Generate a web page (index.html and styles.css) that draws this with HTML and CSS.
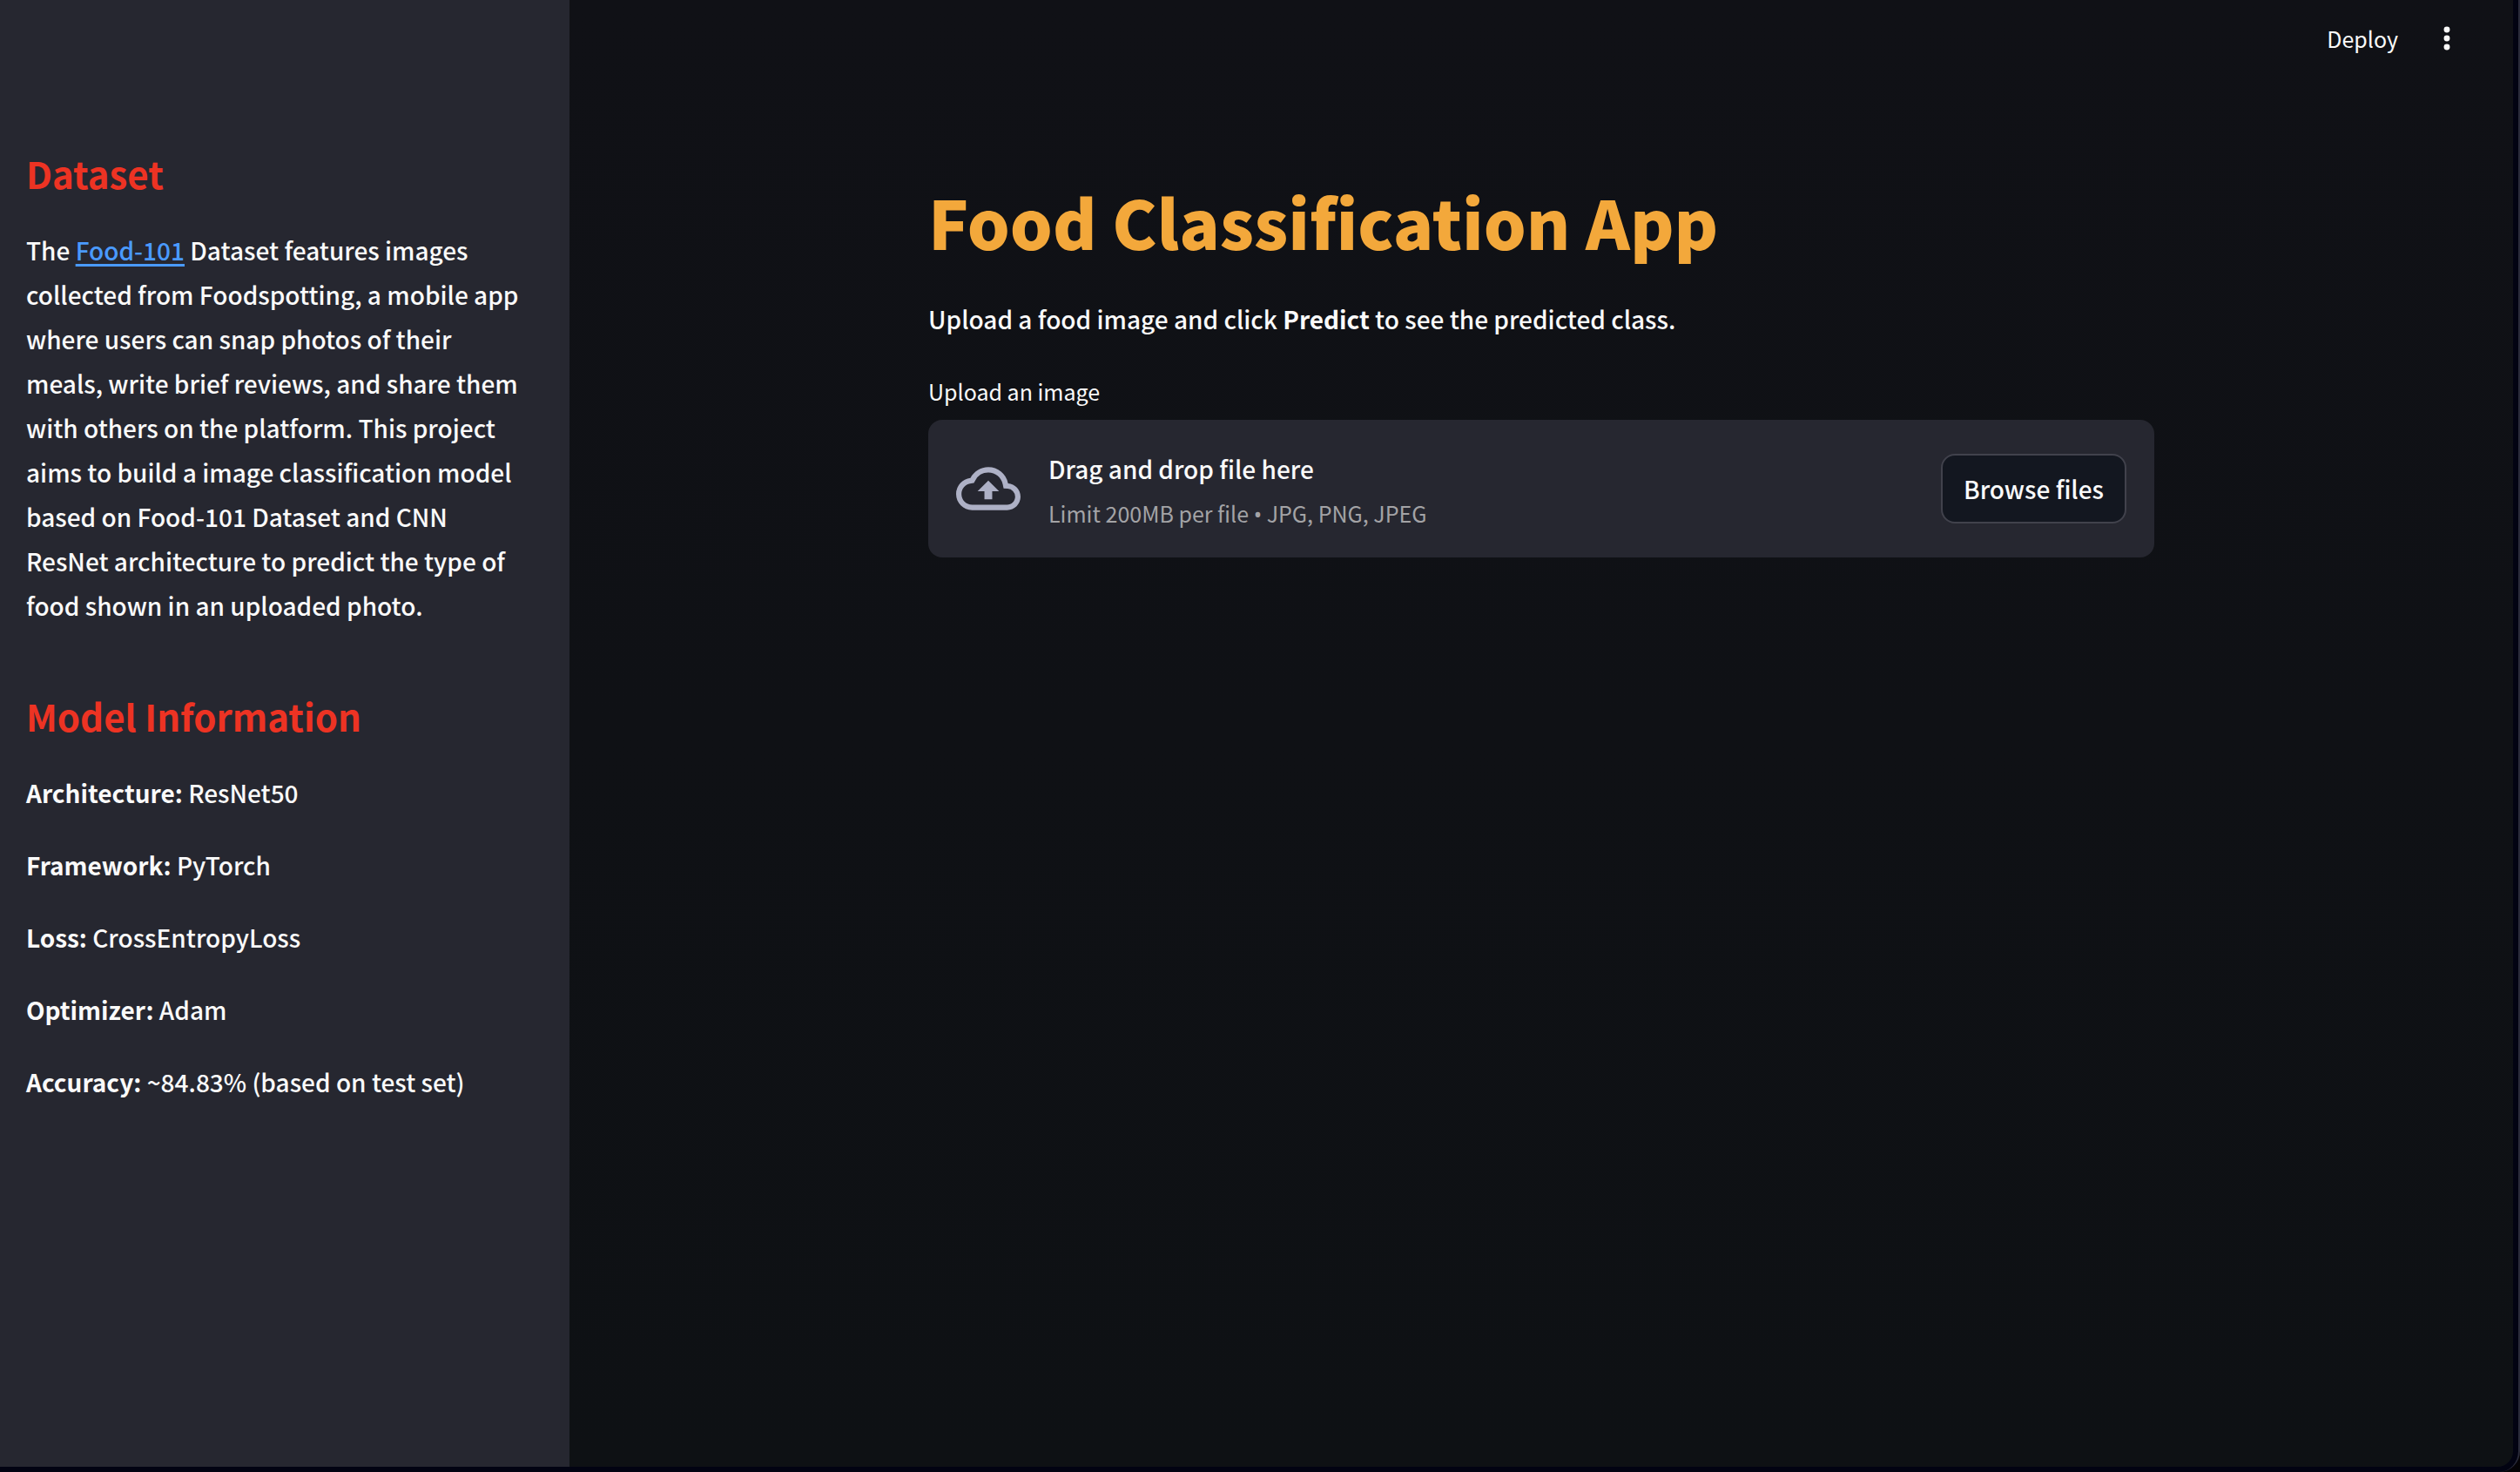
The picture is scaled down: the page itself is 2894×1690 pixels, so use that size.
FILE: index.html
```html
<!DOCTYPE html>
<html lang="en">
<head>
<meta charset="utf-8">
<meta name="viewport" content="width=device-width, initial-scale=1">
<title>Food Classification App</title>
<link rel="stylesheet" href="styles.css">
</head>
<body>
<div class="window">
  <div class="app">
    <aside class="sidebar">
      <section class="section">
        <h2>Dataset</h2>
        <p>The <a href="#food-101">Food-101</a> Dataset features images collected from Foodspotting, a mobile app where users can snap photos of their meals, write brief reviews, and share them with others on the platform. This project aims to build a image classification model based on Food-101 Dataset and CNN ResNet architecture to predict the type of food shown in an uploaded photo.</p>
      </section>
      <section class="section">
        <h2>Model Information</h2>
        <p><strong>Architecture:</strong> ResNet50</p>
        <p><strong>Framework:</strong> PyTorch</p>
        <p><strong>Loss:</strong> CrossEntropyLoss</p>
        <p><strong>Optimizer:</strong> Adam</p>
        <p><strong>Accuracy:</strong> ~84.83% (based on test set)</p>
      </section>
    </aside>
    <div class="content">
      <header class="toolbar">
        <button type="button" class="deploy">Deploy</button>
        <button type="button" class="menu" aria-label="Main menu">
          <svg width="32" height="32" viewBox="0 0 24 24" fill="currentColor" aria-hidden="true"><circle cx="12" cy="4.500" r="2.600"/><circle cx="12" cy="12" r="2.600"/><circle cx="12" cy="19.500" r="2.600"/></svg>
        </button>
      </header>
      <main class="main">
        <h1>Food Classification App</h1>
        <p>Upload a food image and click <strong>Predict</strong> to see the predicted class.</p>
        <label class="label" for="upload">Upload an image</label>
        <div class="dropzone">
          <input class="file" id="upload" type="file" accept=".jpg,.png,.jpeg">
          <svg class="cloud" width="74" height="74" viewBox="0 0 24 24" fill="currentColor" aria-hidden="true"><path d="M19.350 10.040A7.490 7.490 0 0 0 12 4C9.110 4 6.600 5.640 5.350 8.040A5.994 5.994 0 0 0 0 14c0 3.310 2.690 6 6 6h13c2.760 0 5-2.240 5-5 0-2.640-2.050-4.780-4.650-4.960zM19 18H6c-2.210 0-4-1.790-4-4 0-2.050 1.530-3.760 3.560-3.970l1.070-.11.5-.95A5.469 5.469 0 0 1 12 6c2.620 0 4.880 1.860 5.390 4.430l.3 1.500 1.530.11A2.980 2.980 0 0 1 22 15c0 1.650-1.350 3-3 3zM8 13h2.550v3h2.900v-3H16l-4-4z"/></svg>
          <div class="hint">
            <span>Drag and drop file here</span>
            <small>Limit 200MB per file <span class="bullet">•</span> JPG, PNG, JPEG</small>
          </div>
          <button type="button" class="browse">Browse files</button>
        </div>
      </main>
    </div>
  </div>
</div>
</body>
</html>
```
FILE: styles.css
```css
* {
  box-sizing: border-box;
}

body {
  margin: 0;
  background: #050306;
  color: #fafafa;
  font-family: "Noto Sans CJK SC", "Noto Sans", sans-serif;
  font-size: 28px;
  font-weight: 500;
  line-height: 51px;
}

h1, h2, p {
  margin: 0;
}

button {
  font: inherit;
  color: inherit;
  background: none;
  border: 0;
  padding: 0;
}

.window {
  display: flex;
  min-height: 100vh;
  padding: 0 6px 6px 0;
  border-right: 2px solid #2a2b3a;
  border-radius: 0 0 24px 0;
  background: #020312;
}

.app {
  flex: 1;
  display: flex;
  border-radius: 0 0 18px 0;
  background: linear-gradient(#101116, #0e1114);
}

.sidebar {
  flex: none;
  display: flex;
  flex-direction: column;
  gap: 72px;
  width: 654px;
  padding: 170px 48px 0 30px;
  background: #262730;
}

.section {
  display: flex;
  flex-direction: column;
  gap: 32px;
}

h2 {
  padding-bottom: 2px;
  color: #ed3323;
  font-size: 42px;
  line-height: 58px;
}

a {
  color: #4a9aff;
  text-decoration-thickness: 3px;
  text-underline-offset: 4px;
}

.content {
  flex: 1;
  display: flex;
  flex-direction: column;
}

.toolbar {
  display: flex;
  align-items: center;
  justify-content: flex-end;
  gap: 40px;
  height: 88px;
  padding-right: 60px;
}

.deploy {
  font-size: 25px;
  font-weight: 400;
}

.menu {
  display: flex;
}

.main {
  display: flex;
  flex-direction: column;
  width: 1408px;
  max-width: 100%;
  margin: 0 auto;
  padding-top: 113px;
}

h1 {
  margin-bottom: 34px;
  color: #f3a83b;
  font-size: 77px;
  font-weight: 900;
  line-height: 106px;
}

.label {
  margin: 36px 0 12px;
  font-size: 25px;
  font-weight: 400;
  line-height: 42px;
}

.dropzone {
  display: flex;
  align-items: center;
  gap: 32px;
  min-height: 158px;
  padding: 0 32px;
  border-radius: 16px;
  background: #262730;
}

.file {
  position: absolute;
  width: 1px;
  height: 1px;
  opacity: 0;
}

.cloud {
  flex: none;
  color: #aeb1c6;
}

.hint {
  flex: 1;
  display: flex;
  flex-direction: column;
  padding-top: 6px;
}

small {
  color: #a3a3a6;
  font-size: 25px;
  font-weight: 400;
}

.bullet {
  font-family: "Noto Sans", sans-serif;
}

.browse {
  height: 80px;
  padding: 0 24px;
  border: 2px solid #41424c;
  border-radius: 16px;
  background: #131720;
}
```
